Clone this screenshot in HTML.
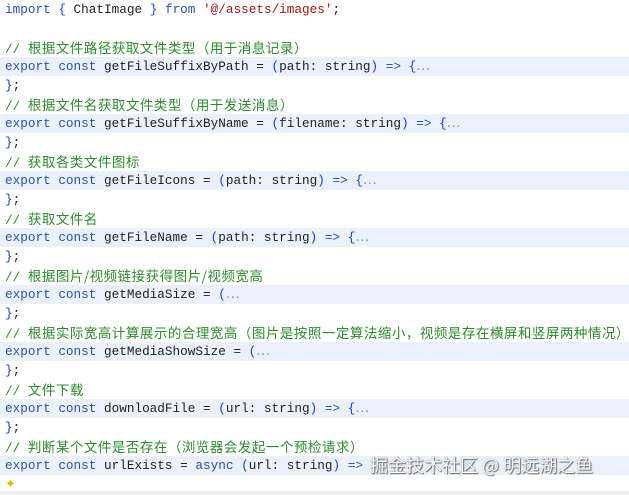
<!DOCTYPE html>
<html><head><meta charset="utf-8"><style>
html,body{margin:0;padding:0;background:#fff;width:629px;height:495px;overflow:hidden}
.ed{position:relative;font-family:"Liberation Mono","Noto Sans CJK SC",monospace;font-size:12.7px;color:#1f1f1f}
.l{height:19px;line-height:19px;padding-left:5px;white-space:pre}
.h{background:#eaf1fb}
.k{color:#2a52a8}
.b{color:#1a3fd0}
.s{color:#a31515}
.c{color:#2e8b2e}
.c .z{font-family:"Noto Sans CJK SC",sans-serif;font-size:13.5px;letter-spacing:0.5px}
.e{color:#888}
.wm{position:absolute;left:370px;top:455px;font-family:"Noto Sans CJK SC",sans-serif;font-size:18px;color:#fff;text-shadow:0 0 1px #555,1px 1px 1px #666;line-height:20px}
.bot{position:absolute;left:0;top:491px;width:629px;height:4px;background:#eee}
</style></head><body><div class="ed">
<div class="l"><span class="k">import</span> <span class="b">{</span> ChatImage <span class="b">}</span> <span class="k">from</span> <span class="s">'@/assets/images'</span>;</div>
<div class="l"> </div>
<div class="l c">// <span class="z">根据文件路径获取文件类型（用于消息记录）</span></div>
<div class="l h"><span class="k">export</span> <span class="k">const</span> getFileSuffixByPath = <span class="b">(</span>path: string<span class="b">)</span> <span class="k">=&gt;</span> <span class="b">{</span><span class="e">⋯</span></div>
<div class="l"><span class="b">}</span>;</div>
<div class="l c">// <span class="z">根据文件名获取文件类型（用于发送消息）</span></div>
<div class="l h"><span class="k">export</span> <span class="k">const</span> getFileSuffixByName = <span class="b">(</span>filename: string<span class="b">)</span> <span class="k">=&gt;</span> <span class="b">{</span><span class="e">⋯</span></div>
<div class="l"><span class="b">}</span>;</div>
<div class="l c">// <span class="z">获取各类文件图标</span></div>
<div class="l h"><span class="k">export</span> <span class="k">const</span> getFileIcons = <span class="b">(</span>path: string<span class="b">)</span> <span class="k">=&gt;</span> <span class="b">{</span><span class="e">⋯</span></div>
<div class="l"><span class="b">}</span>;</div>
<div class="l c">// <span class="z">获取文件名</span></div>
<div class="l h"><span class="k">export</span> <span class="k">const</span> getFileName = <span class="b">(</span>path: string<span class="b">)</span> <span class="k">=&gt;</span> <span class="b">{</span><span class="e">⋯</span></div>
<div class="l"><span class="b">}</span>;</div>
<div class="l c">// <span class="z">根据图片/视频链接获得图片/视频宽高</span></div>
<div class="l h"><span class="k">export</span> <span class="k">const</span> getMediaSize = <span class="b">(</span><span class="e">⋯</span></div>
<div class="l"><span class="b">}</span>;</div>
<div class="l c">// <span class="z">根据实际宽高计算展示的合理宽高（图片是按照一定算法缩小，视频是存在横屏和竖屏两种情况）</span></div>
<div class="l h"><span class="k">export</span> <span class="k">const</span> getMediaShowSize = <span class="b">(</span><span class="e">⋯</span></div>
<div class="l"><span class="b">}</span>;</div>
<div class="l c">// <span class="z">文件下载</span></div>
<div class="l h"><span class="k">export</span> <span class="k">const</span> downloadFile = <span class="b">(</span>url: string<span class="b">)</span> <span class="k">=&gt;</span> <span class="b">{</span><span class="e">⋯</span></div>
<div class="l"><span class="b">}</span>;</div>
<div class="l c">// <span class="z">判断某个文件是否存在（浏览器会发起一个预检请求）</span></div>
<div class="l h"><span class="k">export</span> <span class="k">const</span> urlExists = <span class="k">async</span> <span class="b">(</span>url: string<span class="b">)</span> <span class="k">=&gt;</span></div>
<div class="l"><span style="color:#e8b400;font-size:13px">✦</span></div>
<div class="wm">掘金技术社区 @ 明远湖之鱼</div>
<div class="bot"></div>
</div></body></html>
